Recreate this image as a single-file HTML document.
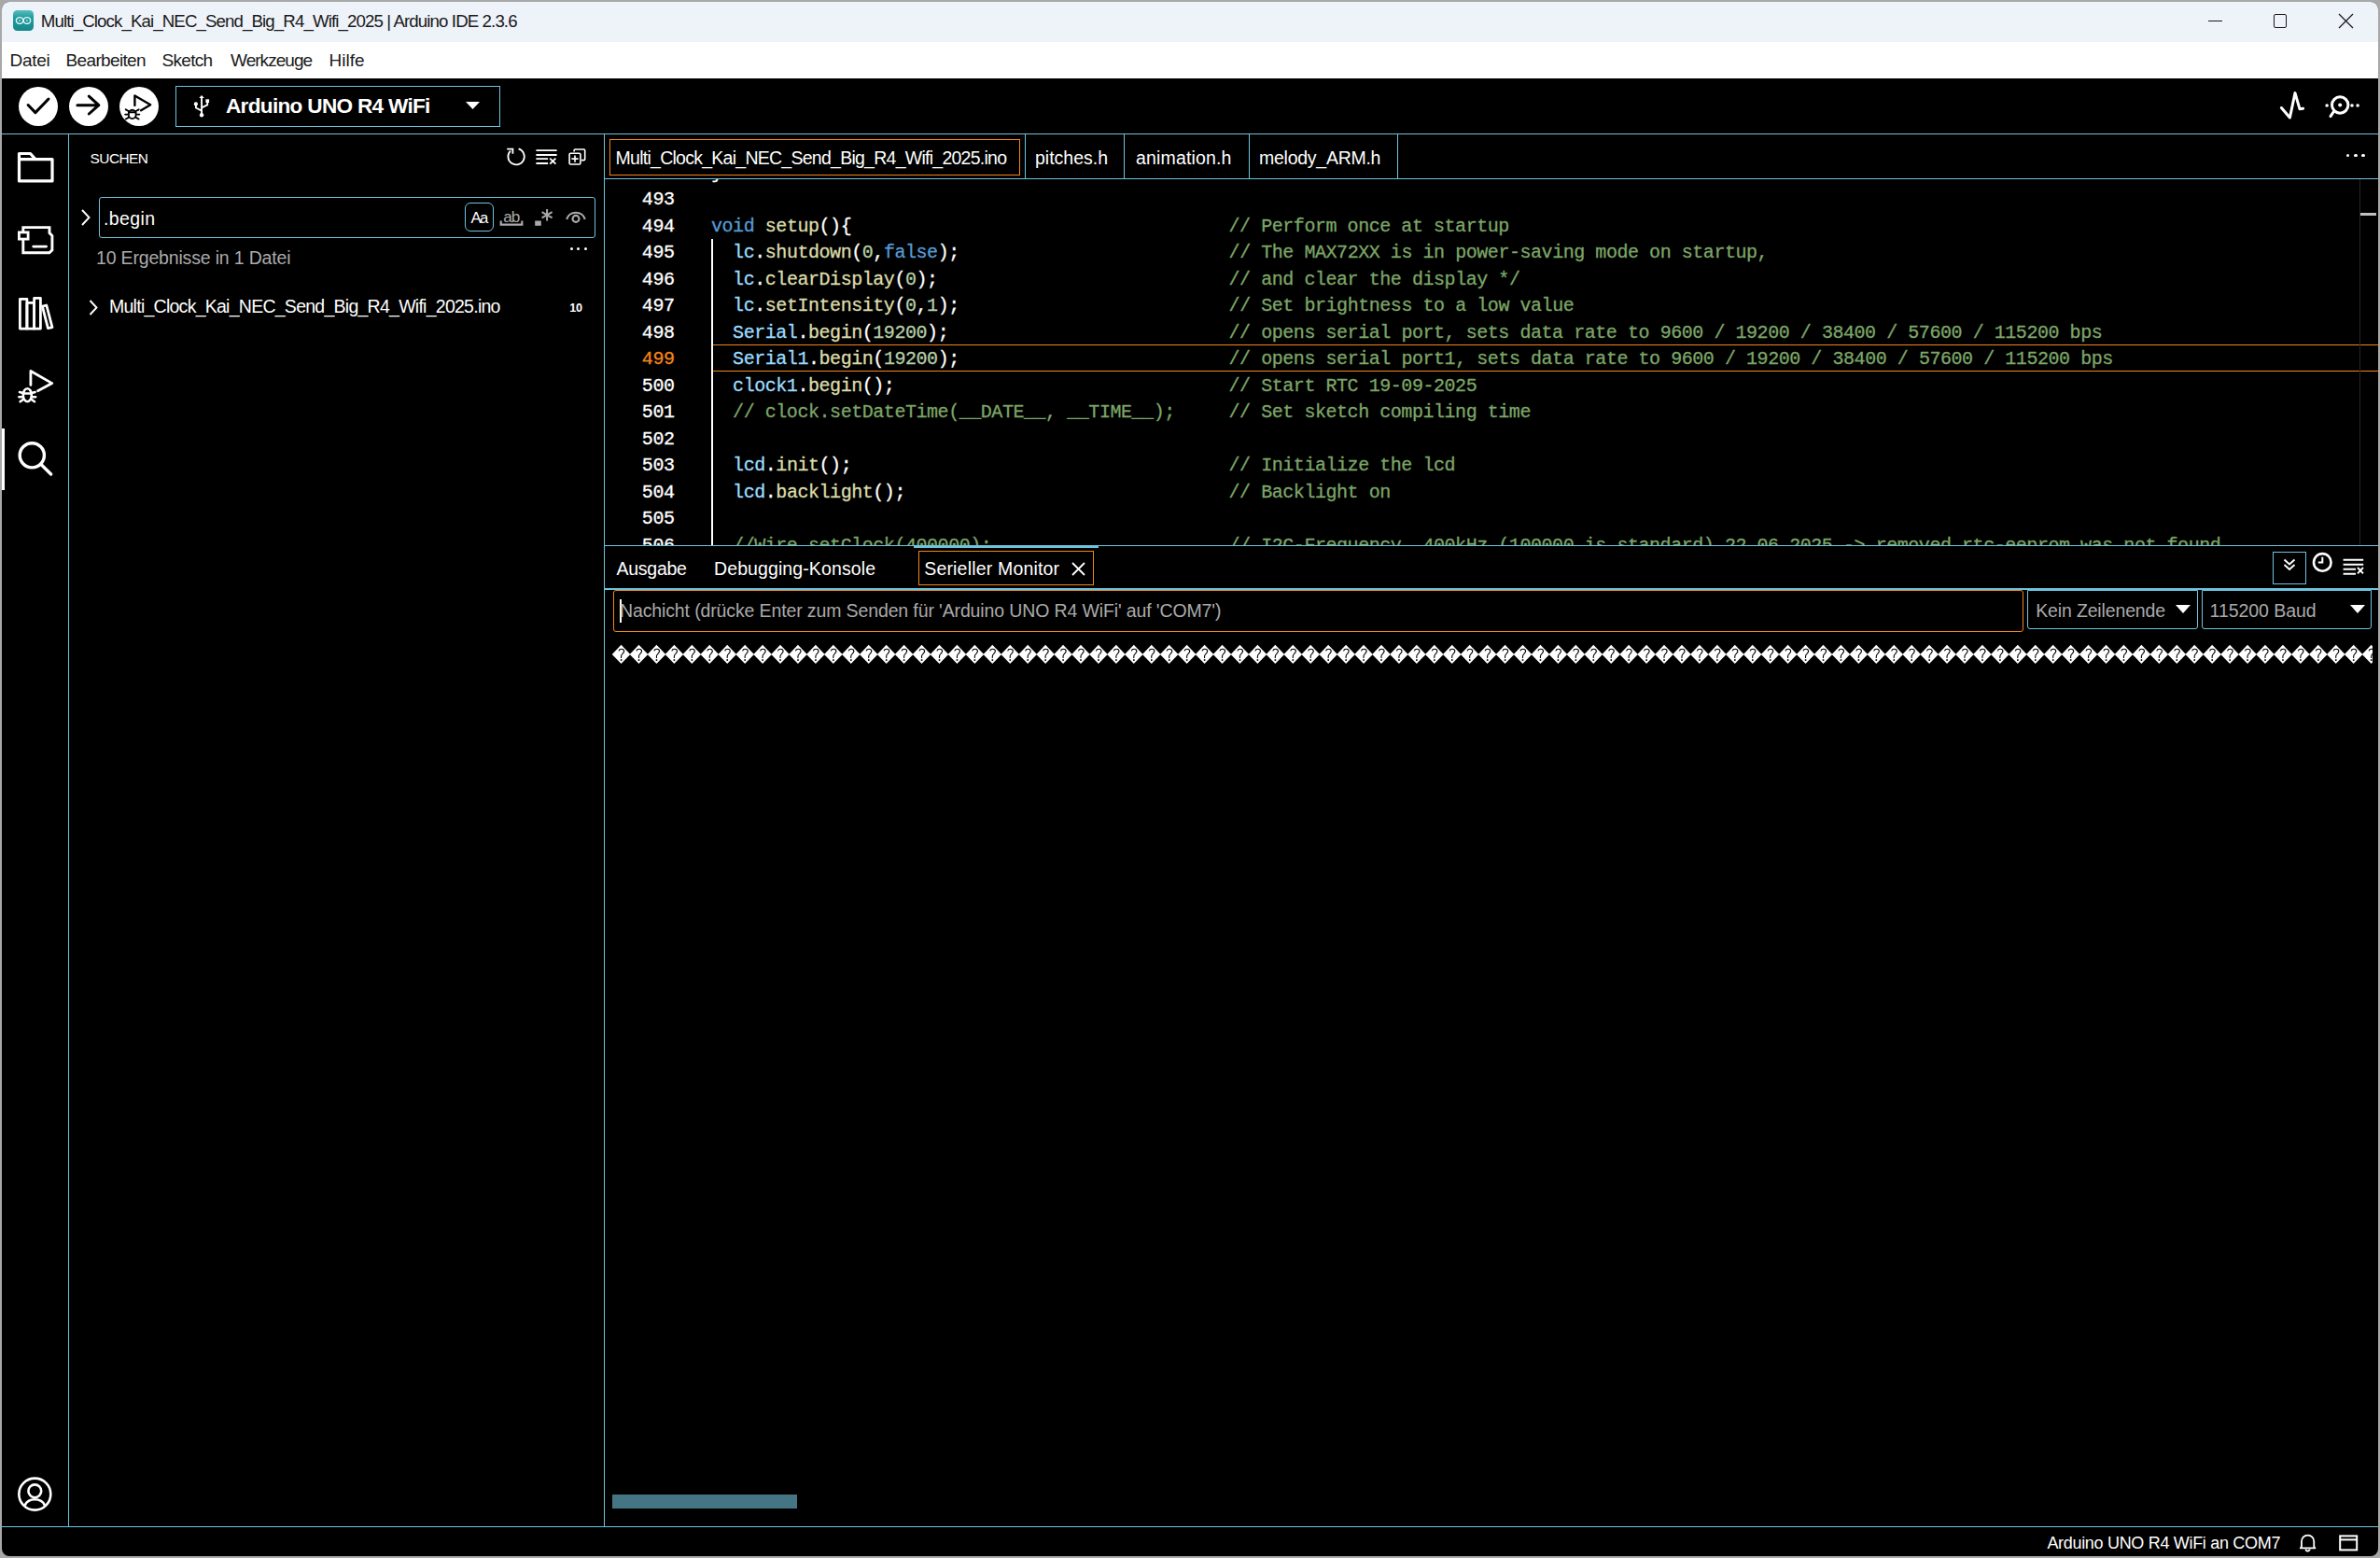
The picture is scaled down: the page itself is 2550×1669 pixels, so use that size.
<!DOCTYPE html><html><head><meta charset="utf-8"><title>Arduino IDE</title><style>
html,body{margin:0;padding:0;}
body{width:2550px;height:1669px;overflow:hidden;position:relative;background:#a8a8a8;font-family:"Liberation Sans", sans-serif;}
.r{position:absolute;}
.t{position:absolute;white-space:pre;line-height:1;}
.ln{position:absolute;left:0;width:74.5px;text-align:right;font-family:"Liberation Mono", monospace;font-size:20px;letter-spacing:-0.45px;line-height:28.5px;height:28.5px;-webkit-text-stroke:0.3px currentColor;}
.cl{position:absolute;left:114.0px;white-space:pre;font-family:"Liberation Mono", monospace;font-size:20px;letter-spacing:-0.45px;line-height:28.5px;height:28.5px;-webkit-text-stroke:0.3px currentColor;}
</style></head><body><div class="r" style="left:2px;top:2px;width:2546px;height:1665px;background:#000;border-radius:8px;"></div>
<div class="r" style="left:2px;top:2px;width:2546px;height:43px;background:#eef2f9;border-radius:8px 8px 0 0;"></div>
<div class="r" style="left:2px;top:45px;width:2546px;height:39px;background:#ffffff;"></div>
<svg class="r" style="left:13px;top:11px" width="24" height="22" viewBox="0 0 24 22"><defs><linearGradient id="ag" x1="0" y1="0" x2="0" y2="1"><stop offset="0" stop-color="#5cbcbd"/><stop offset="0.35" stop-color="#1e9fa1"/><stop offset="1" stop-color="#17878a"/></linearGradient></defs><rect x="1" y="0" width="22" height="22" rx="4.5" fill="url(#ag)"/><g fill="none" stroke="#e6f4f4" stroke-width="1.4"><ellipse cx="8.1" cy="11" rx="3.7" ry="3.4"/><ellipse cx="15.9" cy="11" rx="3.7" ry="3.4"/></g><rect x="7.2" y="10.3" width="1.6" height="1.4" fill="#cde8e8"/><rect x="15.1" y="10.3" width="1.6" height="1.4" fill="#cde8e8"/></svg>
<div class="t" style="left:43.8px;top:13.67px;font-size:18.7px;color:#1a1a1a;font-weight:400;letter-spacing:-0.9px;font-family:"Liberation Sans", sans-serif;">Multi_Clock_Kai_NEC_Send_Big_R4_Wifi_2025 | Arduino IDE 2.3.6</div>
<div class="r" style="left:2366px;top:22px;width:15px;height:1.2px;background:#1a1a1a;"></div>
<div class="r" style="left:2435.5px;top:15px;width:14.5px;height:14.5px;box-sizing:border-box;border:1.3px solid #1a1a1a;border-radius:2px;"></div>
<svg class="r" style="left:2505px;top:14px" width="17" height="17" viewBox="0 0 17 17"><path d="M1 1L16 16M16 1L1 16" stroke="#1a1a1a" stroke-width="1.3"/></svg>
<div class="t" style="left:10.6px;top:55.22px;font-size:19px;color:#1a1a1a;font-weight:400;letter-spacing:-0.3px;font-family:"Liberation Sans", sans-serif;">Datei</div>
<div class="t" style="left:70.6px;top:55.22px;font-size:19px;color:#1a1a1a;font-weight:400;letter-spacing:-0.66px;font-family:"Liberation Sans", sans-serif;">Bearbeiten</div>
<div class="t" style="left:173.4px;top:55.22px;font-size:19px;color:#1a1a1a;font-weight:400;letter-spacing:-0.66px;font-family:"Liberation Sans", sans-serif;">Sketch</div>
<div class="t" style="left:247px;top:55.22px;font-size:19px;color:#1a1a1a;font-weight:400;letter-spacing:-0.96px;font-family:"Liberation Sans", sans-serif;">Werkzeuge</div>
<div class="t" style="left:352.4px;top:55.22px;font-size:19px;color:#1a1a1a;font-weight:400;letter-spacing:0.05px;font-family:"Liberation Sans", sans-serif;">Hilfe</div>
<div class="r" style="left:2px;top:143px;width:2546px;height:1px;background:#6fc3df;"></div>
<div class="r" style="left:19.8px;top:92.9px;width:42.2px;height:42.2px;border-radius:50%;background:#fff"></div>
<div class="r" style="left:73.8px;top:92.9px;width:42.2px;height:42.2px;border-radius:50%;background:#fff"></div>
<div class="r" style="left:127.9px;top:92.9px;width:42.2px;height:42.2px;border-radius:50%;background:#fff"></div>
<svg class="r" style="left:20px;top:93px" width="42" height="42" viewBox="0 0 42 42"><path d="M10.1 19.5L17.9 27.6L32 13" fill="none" stroke="#000" stroke-width="3" stroke-linecap="round" stroke-linejoin="round"/></svg>
<svg class="r" style="left:74px;top:93px" width="42" height="42" viewBox="0 0 42 42"><path d="M8.9 19.7H31.8M21.3 10.1L31.8 19.7L21.3 29" fill="none" stroke="#000" stroke-width="3" stroke-linecap="round" stroke-linejoin="round"/></svg>
<svg class="r" style="left:128px;top:93px" width="42" height="42" viewBox="0 0 42 42"><path d="M16.4 19.9V9.5L33.2 19.2L23.1 25.3" fill="none" stroke="#000" stroke-width="2.4" stroke-linecap="round" stroke-linejoin="round"/><g fill="none" stroke="#000" stroke-width="1.9" stroke-linecap="round"><ellipse cx="13.7" cy="29.4" rx="4" ry="4.7"/><path d="M9.9 27.2H17.5M6.7 24.3L9.7 26M20.7 24.3L17.7 26M6.1 29.6H9.6M17.8 29.6H21.3M6.8 34.5L9.8 32.8M20.6 34.5L17.6 32.8"/></g></svg>
<div class="r" style="left:188px;top:92px;width:348px;height:44px;box-sizing:border-box;border:1px solid #6fc3df;"></div>
<svg class="r" style="left:203px;top:97px" width="26" height="34" viewBox="0 0 26 34"><g fill="none" stroke="#fff" stroke-width="1.9" stroke-linejoin="round"><path d="M13.05 7.5V26"/><path d="M6.9 14.4V18.5L13.05 21.6"/><path d="M19.2 12.2V15.4L13.05 18.4"/></g><path d="M10.3 7.9L13.05 5L15.8 7.9Z" fill="#fff"/><circle cx="13.05" cy="26.2" r="2.2" fill="#fff"/><circle cx="6.9" cy="14.4" r="2.1" fill="#fff"/><rect x="17.4" y="9.3" width="3.7" height="3.7" fill="#fff"/></svg>
<div class="t" style="left:242px;top:103.07px;font-size:22.6px;color:#fff;font-weight:700;letter-spacing:-0.7px;font-family:"Liberation Sans", sans-serif;">Arduino UNO R4 WiFi</div>
<svg class="r" style="left:498px;top:108px" width="17" height="10" viewBox="0 0 17 10"><path d="M1 1H16L8.5 9Z" fill="#fff"/></svg>
<svg class="r" style="left:2440px;top:96px" width="32" height="34" viewBox="0 0 32 34"><path d="M4.4 19.5L13.4 30L19 3.6L24 20.8L27.6 20.3" fill="none" stroke="#fff" stroke-width="3" stroke-linecap="round" stroke-linejoin="round"/></svg>
<svg class="r" style="left:2488px;top:96px" width="44" height="34" viewBox="0 0 44 34"><circle cx="19.2" cy="16.5" r="8.7" fill="none" stroke="#fff" stroke-width="3"/><circle cx="19.2" cy="16.5" r="2" fill="#fff"/><circle cx="5.1" cy="17" r="1.8" fill="#fff"/><circle cx="32" cy="17" r="1.8" fill="#fff"/><circle cx="38.1" cy="17" r="1.8" fill="#fff"/><path d="M12.8 23L9 28.6" stroke="#fff" stroke-width="3" stroke-linecap="round"/></svg>
<div class="r" style="left:73px;top:144px;width:1px;height:1491px;background:#6fc3df;"></div>
<div class="r" style="left:2px;top:459px;width:3px;height:66px;background:#fff;"></div>
<svg class="r" style="left:17px;top:161px" width="44" height="37" viewBox="0 0 44 37"><path d="M3.5 3.5H15.5L21 9.6H39V32.9H3.5Z M3.5 9.6H21" fill="none" stroke="#fff" stroke-width="3.2" stroke-linejoin="round"/></svg>
<svg class="r" style="left:17px;top:240px" width="44" height="34" viewBox="0 0 44 34"><path d="M7.8 3.6H36V9.6L38.9 12.6V27.8L35.9 30.7H7.8V3.6Z" fill="none" stroke="#fff" stroke-width="2.9" stroke-linejoin="miter"/><rect x="3.4" y="8.9" width="9.7" height="7.2" fill="#000" stroke="#fff" stroke-width="2.8"/><path d="M18.7 24.1H32.6" stroke="#fff" stroke-width="2.8" stroke-linecap="round"/></svg>
<svg class="r" style="left:17px;top:315px" width="44" height="42" viewBox="0 0 44 42"><g fill="none" stroke="#fff" stroke-width="2.8" stroke-linejoin="round"><path d="M4.4 5.3H11.9V37.1H4.4Z"/><path d="M11.9 9.4H19.6V37.1H11.9Z"/><path d="M19.6 4.4H26.4V37.1H19.6Z"/><path d="M28.4 13.1L32.8 12L39 35.6L34.4 36.6Z"/></g></svg>
<svg class="r" style="left:17px;top:394px" width="44" height="42" viewBox="0 0 44 42"><path d="M15.9 18.4V3.5L38.8 16.6L23.5 24.7" fill="none" stroke="#fff" stroke-width="2.8" stroke-linecap="round" stroke-linejoin="round"/><g fill="none" stroke="#fff" stroke-width="2.6" stroke-linecap="round"><ellipse cx="12.3" cy="29.2" rx="4.5" ry="7"/><path d="M7.8 27.5H16.8M4 26L7.5 27M20.6 26L17.1 27M3.4 31.3H7.6M17 31.3H21.2M4.6 36.2L7.8 34M20 36.2L16.8 34"/></g></svg>
<svg class="r" style="left:17px;top:470px" width="44" height="44" viewBox="0 0 44 44"><circle cx="17.3" cy="17.8" r="13.1" fill="none" stroke="#fff" stroke-width="3.4"/><path d="M27 27.5L37.6 38" stroke="#fff" stroke-width="3.4" stroke-linecap="round"/></svg>
<svg class="r" style="left:17px;top:1580px" width="40" height="40" viewBox="0 0 40 40"><circle cx="20.3" cy="20.6" r="17" fill="none" stroke="#fff" stroke-width="2.6"/><circle cx="20.3" cy="17.3" r="6.9" fill="none" stroke="#fff" stroke-width="2.6"/><path d="M9.6 32.6C11.5 28.3 15.6 26.3 20.3 26.3C25 26.3 29.1 28.3 31 32.6" fill="none" stroke="#fff" stroke-width="2.6"/></svg>
<div class="r" style="left:647px;top:144px;width:1px;height:1491px;background:#6fc3df;"></div>
<div class="t" style="left:96.5px;top:161.76px;font-size:15.4px;color:#fff;font-weight:400;letter-spacing:-0.5px;font-family:"Liberation Sans", sans-serif;">SUCHEN</div>
<svg class="r" style="left:540px;top:155px" width="24" height="26" viewBox="0 0 24 26"><path d="M6.9 6.6A8.7 8.7 0 1 0 15.6 4.4" fill="none" stroke="#fff" stroke-width="1.8"/><path d="M3.2 4.7H9.4V9.8" fill="none" stroke="#fff" stroke-width="1.8"/></svg>
<svg class="r" style="left:572px;top:157px" width="28" height="22" viewBox="0 0 28 22"><g stroke="#fff" stroke-width="1.8"><path d="M2.4 4.1H24.6M2.4 9H24.6M2.4 13.1H15.1M2.4 18H15.1M17.2 12.6L23.4 18.6M23.4 12.6L17.2 18.6"/></g></svg>
<svg class="r" style="left:606px;top:156px" width="24" height="24" viewBox="0 0 24 24"><path d="M9.1 6.6V5.2Q9.1 4 10.3 4H19.5Q20.7 4 20.7 5.2V14.4Q20.7 15.6 19.5 15.6H17" fill="none" stroke="#fff" stroke-width="1.6"/><rect x="4.1" y="8.2" width="11.8" height="11.8" rx="1.2" fill="none" stroke="#fff" stroke-width="1.6"/><path d="M10 10.5V17.7M6.4 14.1H13.6" stroke="#fff" stroke-width="1.6"/></svg>
<svg class="r" style="left:84px;top:222px" width="16" height="22" viewBox="0 0 16 22"><path d="M4 3L11.5 11L4 19" fill="none" stroke="#fff" stroke-width="1.9"/></svg>
<div class="r" style="left:106px;top:211px;width:532px;height:44px;box-sizing:border-box;border:1.5px solid #6fc3df;border-radius:3px;"></div>
<div class="t" style="left:111px;top:224.79px;font-size:19.5px;color:#fff;font-weight:400;letter-spacing:0.38px;font-family:"Liberation Sans", sans-serif;">.begin</div>
<div class="r" style="left:498px;top:217px;width:31px;height:31px;box-sizing:border-box;border:1.5px solid #6fc3df;border-radius:6px;"></div>
<div class="t" style="left:504.4px;top:225.78px;font-size:16.8px;color:#fff;font-weight:400;letter-spacing:-1.5px;font-family:"Liberation Sans", sans-serif;">Aa</div>
<div class="t" style="left:539.3px;top:223.74px;font-size:17.2px;color:#aaaaaa;font-weight:400;letter-spacing:-1.2px;font-family:"Liberation Sans", sans-serif;">ab</div>
<svg class="r" style="left:534px;top:235px" width="28" height="9" viewBox="0 0 28 9"><path d="M2.7 1.5V5.6H25.3V1.5" fill="none" stroke="#aaaaaa" stroke-width="2.2"/></svg>
<svg class="r" style="left:570px;top:220px" width="26" height="24" viewBox="0 0 26 24"><rect x="3.2" y="16.5" width="6.6" height="5.3" fill="#aaaaaa"/><g stroke="#aaaaaa" stroke-width="2"><path d="M16.1 4V16.4M10.6 7.1L21.6 13.3M21.6 7.1L10.6 13.3"/></g></svg>
<svg class="r" style="left:604px;top:222px" width="26" height="18" viewBox="0 0 26 18"><path d="M3.2 12.9A10.3 10.3 0 0 1 22.8 12.9" fill="none" stroke="#aaaaaa" stroke-width="2.2"/><circle cx="13" cy="12.4" r="3.5" fill="none" stroke="#aaaaaa" stroke-width="2.1"/></svg>
<div class="r" style="left:610.5px;top:265px;width:3.2px;height:3.2px;border-radius:50%;background:#fff"></div>
<div class="r" style="left:617.9px;top:265px;width:3.2px;height:3.2px;border-radius:50%;background:#fff"></div>
<div class="r" style="left:625.5px;top:265px;width:3.2px;height:3.2px;border-radius:50%;background:#fff"></div>
<div class="t" style="left:103px;top:267.49px;font-size:19.5px;color:#aaaaaa;font-weight:400;letter-spacing:-0.17px;font-family:"Liberation Sans", sans-serif;">10 Ergebnisse in 1 Datei</div>
<svg class="r" style="left:92px;top:319px" width="16" height="22" viewBox="0 0 16 22"><path d="M4.5 3L11.5 10.5L4.5 18" fill="none" stroke="#fff" stroke-width="1.9"/></svg>
<div class="t" style="left:117px;top:318.99px;font-size:19.5px;color:#fff;font-weight:400;letter-spacing:-0.74px;font-family:"Liberation Sans", sans-serif;">Multi_Clock_Kai_NEC_Send_Big_R4_Wifi_2025.ino</div>
<div class="t" style="left:610.2px;top:323.53px;font-size:12.6px;color:#fff;font-weight:700;letter-spacing:-0.3px;font-family:"Liberation Sans", sans-serif;">10</div>
<div class="r" style="left:648px;top:191px;width:1900px;height:1px;background:#6fc3df;"></div>
<div class="r" style="left:653px;top:149px;width:440px;height:38.5px;box-sizing:border-box;border:1.3px solid #f38518;"></div>
<div class="t" style="left:659.6px;top:160.09px;font-size:19.5px;color:#fff;font-weight:400;letter-spacing:-0.74px;font-family:"Liberation Sans", sans-serif;">Multi_Clock_Kai_NEC_Send_Big_R4_Wifi_2025.ino</div>
<div class="t" style="left:1109px;top:160.09px;font-size:19.5px;color:#fff;font-weight:400;letter-spacing:0px;font-family:"Liberation Sans", sans-serif;">pitches.h</div>
<div class="t" style="left:1217px;top:160.09px;font-size:19.5px;color:#fff;font-weight:400;letter-spacing:0.16px;font-family:"Liberation Sans", sans-serif;">animation.h</div>
<div class="t" style="left:1349px;top:160.09px;font-size:19.5px;color:#fff;font-weight:400;letter-spacing:-0.26px;font-family:"Liberation Sans", sans-serif;">melody_ARM.h</div>
<div class="r" style="left:1097.5px;top:144px;width:1px;height:47px;background:#6fc3df;"></div>
<div class="r" style="left:1204px;top:144px;width:1px;height:47px;background:#6fc3df;"></div>
<div class="r" style="left:1337.5px;top:144px;width:1px;height:47px;background:#6fc3df;"></div>
<div class="r" style="left:1497px;top:144px;width:1px;height:47px;background:#6fc3df;"></div>
<div class="r" style="left:2514.0px;top:164.9px;width:3.2px;height:3.2px;border-radius:50%;background:#fff"></div>
<div class="r" style="left:2522.4px;top:164.9px;width:3.2px;height:3.2px;border-radius:50%;background:#fff"></div>
<div class="r" style="left:2530.4px;top:164.9px;width:3.2px;height:3.2px;border-radius:50%;background:#fff"></div>
<div class="r" style="left:648px;top:192px;width:1900px;height:392px;overflow:hidden">
<div class="r" style="left:115.5px;top:177.10px;width:1900px;height:28.9px;box-sizing:border-box;border-top:1.2px solid #f38518;border-bottom:1.2px solid #f38518"></div>
<div class="r" style="left:113.9px;top:63.50px;width:1.9px;height:400px;background:#fff"></div>
<div class="cl" style="top:-20.10px"><span style="color:#ffffff">}</span></div>
<div class="ln" style="top:7.90px;color:#fff">493</div>
<div class="cl" style="top:7.90px"></div>
<div class="ln" style="top:36.90px;color:#fff">494</div>
<div class="cl" style="top:36.90px"><span style="color:#569cd6">void</span><span style="color:#ffffff"> </span><span style="color:#dcdcaa">setup</span><span style="color:#ffffff">(){</span>                                   <span style="color:#7ca668">// Perform once at startup</span></div>
<div class="ln" style="top:64.90px;color:#fff">495</div>
<div class="cl" style="top:64.90px"><span style="color:#ffffff">  </span><span style="color:#9cdcfe">lc</span><span style="color:#ffffff">.</span><span style="color:#dcdcaa">shutdown</span><span style="color:#ffffff">(</span><span style="color:#b5cea8">0</span><span style="color:#ffffff">,</span><span style="color:#569cd6">false</span><span style="color:#ffffff">);</span>                         <span style="color:#7ca668">// The MAX72XX is in power-saving mode on startup,</span></div>
<div class="ln" style="top:93.90px;color:#fff">496</div>
<div class="cl" style="top:93.90px"><span style="color:#ffffff">  </span><span style="color:#9cdcfe">lc</span><span style="color:#ffffff">.</span><span style="color:#dcdcaa">clearDisplay</span><span style="color:#ffffff">(</span><span style="color:#b5cea8">0</span><span style="color:#ffffff">);</span>                           <span style="color:#7ca668">// and clear the display */</span></div>
<div class="ln" style="top:121.90px;color:#fff">497</div>
<div class="cl" style="top:121.90px"><span style="color:#ffffff">  </span><span style="color:#9cdcfe">lc</span><span style="color:#ffffff">.</span><span style="color:#dcdcaa">setIntensity</span><span style="color:#ffffff">(</span><span style="color:#b5cea8">0</span><span style="color:#ffffff">,</span><span style="color:#b5cea8">1</span><span style="color:#ffffff">);</span>                         <span style="color:#7ca668">// Set brightness to a low value</span></div>
<div class="ln" style="top:150.90px;color:#fff">498</div>
<div class="cl" style="top:150.90px"><span style="color:#ffffff">  </span><span style="color:#9cdcfe">Serial</span><span style="color:#ffffff">.</span><span style="color:#dcdcaa">begin</span><span style="color:#ffffff">(</span><span style="color:#b5cea8">19200</span><span style="color:#ffffff">);</span>                          <span style="color:#7ca668">// opens serial port, sets data rate to 9600 / 19200 / 38400 / 57600 / 115200 bps</span></div>
<div class="ln" style="top:178.90px;color:#f38518">499</div>
<div class="cl" style="top:178.90px"><span style="color:#ffffff">  </span><span style="color:#9cdcfe">Serial1</span><span style="color:#ffffff">.</span><span style="color:#dcdcaa">begin</span><span style="color:#ffffff">(</span><span style="color:#b5cea8">19200</span><span style="color:#ffffff">);</span>                         <span style="color:#7ca668">// opens serial port1, sets data rate to 9600 / 19200 / 38400 / 57600 / 115200 bps</span></div>
<div class="ln" style="top:207.90px;color:#fff">500</div>
<div class="cl" style="top:207.90px"><span style="color:#ffffff">  </span><span style="color:#9cdcfe">clock1</span><span style="color:#ffffff">.</span><span style="color:#dcdcaa">begin</span><span style="color:#ffffff">();</span>                               <span style="color:#7ca668">// Start RTC 19-09-2025</span></div>
<div class="ln" style="top:235.90px;color:#fff">501</div>
<div class="cl" style="top:235.90px"><span style="color:#ffffff">  </span><span style="color:#7ca668">// clock.setDateTime(__DATE__, __TIME__);</span>     <span style="color:#7ca668">// Set sketch compiling time</span></div>
<div class="ln" style="top:264.90px;color:#fff">502</div>
<div class="cl" style="top:264.90px"></div>
<div class="ln" style="top:292.90px;color:#fff">503</div>
<div class="cl" style="top:292.90px"><span style="color:#ffffff">  </span><span style="color:#9cdcfe">lcd</span><span style="color:#ffffff">.</span><span style="color:#dcdcaa">init</span><span style="color:#ffffff">();</span>                                   <span style="color:#7ca668">// Initialize the lcd</span></div>
<div class="ln" style="top:321.90px;color:#fff">504</div>
<div class="cl" style="top:321.90px"><span style="color:#ffffff">  </span><span style="color:#9cdcfe">lcd</span><span style="color:#ffffff">.</span><span style="color:#dcdcaa">backlight</span><span style="color:#ffffff">();</span>                              <span style="color:#7ca668">// Backlight on</span></div>
<div class="ln" style="top:349.90px;color:#fff">505</div>
<div class="cl" style="top:349.90px"></div>
<div class="ln" style="top:378.90px;color:#fff">506</div>
<div class="cl" style="top:378.90px"><span style="color:#ffffff">  </span><span style="color:#7ca668">//Wire.setClock(400000);</span>                      <span style="color:#7ca668">// I2C-Frequency, 400kHz (100000 is standard) 22.06.2025 -&gt; removed rtc-eeprom was not found</span></div>
</div>
<div class="r" style="left:2528px;top:192px;width:1px;height:392px;background:#262626;"></div>
<div class="r" style="left:2529px;top:228px;width:17px;height:3px;background:#c0c0c0;"></div>
<div class="r" style="left:648px;top:584px;width:1900px;height:1px;background:#6fc3df;"></div>
<div class="r" style="left:979px;top:584px;width:197.5px;height:3px;background:#6fc3df;"></div>
<div class="t" style="left:660.4px;top:599.69px;font-size:19.5px;color:#fff;font-weight:400;letter-spacing:-0.24px;font-family:"Liberation Sans", sans-serif;">Ausgabe</div>
<div class="t" style="left:765px;top:599.69px;font-size:19.5px;color:#fff;font-weight:400;letter-spacing:0.105px;font-family:"Liberation Sans", sans-serif;">Debugging-Konsole</div>
<div class="r" style="left:984px;top:589.9px;width:187.5px;height:37.6px;box-sizing:border-box;border:1.3px solid #f38518;"></div>
<div class="t" style="left:990.2px;top:599.69px;font-size:19.5px;color:#fff;font-weight:400;letter-spacing:0.185px;font-family:"Liberation Sans", sans-serif;">Serieller Monitor</div>
<svg class="r" style="left:1146px;top:600px" width="20" height="20" viewBox="0 0 20 20"><path d="M3 3L16 16M16 3L3 16" stroke="#fff" stroke-width="1.8"/></svg>
<div class="r" style="left:2435px;top:591px;width:36px;height:35px;box-sizing:border-box;border:1px solid #6fc3df;"></div>
<svg class="r" style="left:2443px;top:596px" width="20" height="20" viewBox="0 0 20 20"><path d="M4.5 3.5L10 8.5L15.5 3.5M4.5 9L10 14L15.5 9" fill="none" stroke="#fff" stroke-width="1.9"/></svg>
<svg class="r" style="left:2476px;top:590px" width="26" height="26" viewBox="0 0 26 26"><circle cx="12.3" cy="12.4" r="9.3" fill="none" stroke="#fff" stroke-width="2.6"/><path d="M12.3 6.8V12.6H7.8" fill="none" stroke="#fff" stroke-width="2"/></svg>
<svg class="r" style="left:2508px;top:596px" width="28" height="22" viewBox="0 0 28 22"><g stroke="#fff" stroke-width="1.9"><path d="M2.6 3.8H24.2M2.6 8.8H24.2M2.6 13.8H16M2.6 18.8H16M18 12L24 18.3M24 12L18 18.3"/></g></svg>
<div class="r" style="left:648px;top:630px;width:1900px;height:1.5px;background:#6fc3df;"></div>
<div class="r" style="left:656.5px;top:632px;width:1511.5px;height:44.5px;box-sizing:border-box;border:1.3px solid #f38518;border-radius:3px;"></div>
<div class="r" style="left:664px;top:642px;width:2px;height:24.5px;background:#fff;"></div>
<div class="t" style="left:664px;top:645.19px;font-size:19.5px;color:#aaaaaa;font-weight:400;letter-spacing:-0.126px;font-family:"Liberation Sans", sans-serif;">Nachicht (drücke Enter zum Senden für &#x27;Arduino UNO R4 WiFi&#x27; auf &#x27;COM7&#x27;)</div>
<div class="r" style="left:2172px;top:631.5px;width:183px;height:42.5px;box-sizing:border-box;border:1.3px solid #6fc3df;border-radius:0 0 3px 3px;"></div>
<div class="t" style="left:2181.2px;top:645.39px;font-size:19.5px;color:#aaaaaa;font-weight:400;letter-spacing:-0.146px;font-family:"Liberation Sans", sans-serif;">Kein Zeilenende</div>
<svg class="r" style="left:2330px;top:647px" width="18" height="11" viewBox="0 0 18 11"><path d="M1 1H17L9 10Z" fill="#fff"/></svg>
<div class="r" style="left:2359px;top:631.5px;width:182px;height:42.5px;box-sizing:border-box;border:1.3px solid #6fc3df;border-radius:0 0 3px 3px;"></div>
<div class="t" style="left:2367.6px;top:645.39px;font-size:19.5px;color:#aaaaaa;font-weight:400;letter-spacing:-0.05px;font-family:"Liberation Sans", sans-serif;">115200 Baud</div>
<svg class="r" style="left:2517px;top:647px" width="18" height="11" viewBox="0 0 18 11"><path d="M1 1H17L9 10Z" fill="#fff"/></svg>
<svg class="r" style="left:648px;top:686px" width="1894" height="30"><g transform="translate(17.55 14.9)"><path d="M0 -10.1L9.8 0L0 10.1L-9.8 0Z" fill="#fff"/><path d="M-2.6 -3.6C-2.2 -5.1 -1 -5.6 0.3 -5.6C2 -5.6 3.1 -4.6 3.1 -3.1C3.1 -1 0 -0.4 0 2.2V4.1" fill="none" stroke="#000" stroke-width="1.1"/><rect x="-0.75" y="5.3" width="1.6" height="1.7" fill="#000"/></g><g transform="translate(36.49 14.9)"><path d="M0 -10.1L9.8 0L0 10.1L-9.8 0Z" fill="#fff"/><path d="M-2.6 -3.6C-2.2 -5.1 -1 -5.6 0.3 -5.6C2 -5.6 3.1 -4.6 3.1 -3.1C3.1 -1 0 -0.4 0 2.2V4.1" fill="none" stroke="#000" stroke-width="1.1"/><rect x="-0.75" y="5.3" width="1.6" height="1.7" fill="#000"/></g><g transform="translate(55.43 14.9)"><path d="M0 -10.1L9.8 0L0 10.1L-9.8 0Z" fill="#fff"/><path d="M-2.6 -3.6C-2.2 -5.1 -1 -5.6 0.3 -5.6C2 -5.6 3.1 -4.6 3.1 -3.1C3.1 -1 0 -0.4 0 2.2V4.1" fill="none" stroke="#000" stroke-width="1.1"/><rect x="-0.75" y="5.3" width="1.6" height="1.7" fill="#000"/></g><g transform="translate(74.37 14.9)"><path d="M0 -10.1L9.8 0L0 10.1L-9.8 0Z" fill="#fff"/><path d="M-2.6 -3.6C-2.2 -5.1 -1 -5.6 0.3 -5.6C2 -5.6 3.1 -4.6 3.1 -3.1C3.1 -1 0 -0.4 0 2.2V4.1" fill="none" stroke="#000" stroke-width="1.1"/><rect x="-0.75" y="5.3" width="1.6" height="1.7" fill="#000"/></g><g transform="translate(93.31 14.9)"><path d="M0 -10.1L9.8 0L0 10.1L-9.8 0Z" fill="#fff"/><path d="M-2.6 -3.6C-2.2 -5.1 -1 -5.6 0.3 -5.6C2 -5.6 3.1 -4.6 3.1 -3.1C3.1 -1 0 -0.4 0 2.2V4.1" fill="none" stroke="#000" stroke-width="1.1"/><rect x="-0.75" y="5.3" width="1.6" height="1.7" fill="#000"/></g><g transform="translate(112.25 14.9)"><path d="M0 -10.1L9.8 0L0 10.1L-9.8 0Z" fill="#fff"/><path d="M-2.6 -3.6C-2.2 -5.1 -1 -5.6 0.3 -5.6C2 -5.6 3.1 -4.6 3.1 -3.1C3.1 -1 0 -0.4 0 2.2V4.1" fill="none" stroke="#000" stroke-width="1.1"/><rect x="-0.75" y="5.3" width="1.6" height="1.7" fill="#000"/></g><g transform="translate(131.19 14.9)"><path d="M0 -10.1L9.8 0L0 10.1L-9.8 0Z" fill="#fff"/><path d="M-2.6 -3.6C-2.2 -5.1 -1 -5.6 0.3 -5.6C2 -5.6 3.1 -4.6 3.1 -3.1C3.1 -1 0 -0.4 0 2.2V4.1" fill="none" stroke="#000" stroke-width="1.1"/><rect x="-0.75" y="5.3" width="1.6" height="1.7" fill="#000"/></g><g transform="translate(150.13 14.9)"><path d="M0 -10.1L9.8 0L0 10.1L-9.8 0Z" fill="#fff"/><path d="M-2.6 -3.6C-2.2 -5.1 -1 -5.6 0.3 -5.6C2 -5.6 3.1 -4.6 3.1 -3.1C3.1 -1 0 -0.4 0 2.2V4.1" fill="none" stroke="#000" stroke-width="1.1"/><rect x="-0.75" y="5.3" width="1.6" height="1.7" fill="#000"/></g><g transform="translate(169.07 14.9)"><path d="M0 -10.1L9.8 0L0 10.1L-9.8 0Z" fill="#fff"/><path d="M-2.6 -3.6C-2.2 -5.1 -1 -5.6 0.3 -5.6C2 -5.6 3.1 -4.6 3.1 -3.1C3.1 -1 0 -0.4 0 2.2V4.1" fill="none" stroke="#000" stroke-width="1.1"/><rect x="-0.75" y="5.3" width="1.6" height="1.7" fill="#000"/></g><g transform="translate(188.01 14.9)"><path d="M0 -10.1L9.8 0L0 10.1L-9.8 0Z" fill="#fff"/><path d="M-2.6 -3.6C-2.2 -5.1 -1 -5.6 0.3 -5.6C2 -5.6 3.1 -4.6 3.1 -3.1C3.1 -1 0 -0.4 0 2.2V4.1" fill="none" stroke="#000" stroke-width="1.1"/><rect x="-0.75" y="5.3" width="1.6" height="1.7" fill="#000"/></g><g transform="translate(206.95 14.9)"><path d="M0 -10.1L9.8 0L0 10.1L-9.8 0Z" fill="#fff"/><path d="M-2.6 -3.6C-2.2 -5.1 -1 -5.6 0.3 -5.6C2 -5.6 3.1 -4.6 3.1 -3.1C3.1 -1 0 -0.4 0 2.2V4.1" fill="none" stroke="#000" stroke-width="1.1"/><rect x="-0.75" y="5.3" width="1.6" height="1.7" fill="#000"/></g><g transform="translate(225.89 14.9)"><path d="M0 -10.1L9.8 0L0 10.1L-9.8 0Z" fill="#fff"/><path d="M-2.6 -3.6C-2.2 -5.1 -1 -5.6 0.3 -5.6C2 -5.6 3.1 -4.6 3.1 -3.1C3.1 -1 0 -0.4 0 2.2V4.1" fill="none" stroke="#000" stroke-width="1.1"/><rect x="-0.75" y="5.3" width="1.6" height="1.7" fill="#000"/></g><g transform="translate(244.83 14.9)"><path d="M0 -10.1L9.8 0L0 10.1L-9.8 0Z" fill="#fff"/><path d="M-2.6 -3.6C-2.2 -5.1 -1 -5.6 0.3 -5.6C2 -5.6 3.1 -4.6 3.1 -3.1C3.1 -1 0 -0.4 0 2.2V4.1" fill="none" stroke="#000" stroke-width="1.1"/><rect x="-0.75" y="5.3" width="1.6" height="1.7" fill="#000"/></g><g transform="translate(263.77 14.9)"><path d="M0 -10.1L9.8 0L0 10.1L-9.8 0Z" fill="#fff"/><path d="M-2.6 -3.6C-2.2 -5.1 -1 -5.6 0.3 -5.6C2 -5.6 3.1 -4.6 3.1 -3.1C3.1 -1 0 -0.4 0 2.2V4.1" fill="none" stroke="#000" stroke-width="1.1"/><rect x="-0.75" y="5.3" width="1.6" height="1.7" fill="#000"/></g><g transform="translate(282.71 14.9)"><path d="M0 -10.1L9.8 0L0 10.1L-9.8 0Z" fill="#fff"/><path d="M-2.6 -3.6C-2.2 -5.1 -1 -5.6 0.3 -5.6C2 -5.6 3.1 -4.6 3.1 -3.1C3.1 -1 0 -0.4 0 2.2V4.1" fill="none" stroke="#000" stroke-width="1.1"/><rect x="-0.75" y="5.3" width="1.6" height="1.7" fill="#000"/></g><g transform="translate(301.65 14.9)"><path d="M0 -10.1L9.8 0L0 10.1L-9.8 0Z" fill="#fff"/><path d="M-2.6 -3.6C-2.2 -5.1 -1 -5.6 0.3 -5.6C2 -5.6 3.1 -4.6 3.1 -3.1C3.1 -1 0 -0.4 0 2.2V4.1" fill="none" stroke="#000" stroke-width="1.1"/><rect x="-0.75" y="5.3" width="1.6" height="1.7" fill="#000"/></g><g transform="translate(320.59 14.9)"><path d="M0 -10.1L9.8 0L0 10.1L-9.8 0Z" fill="#fff"/><path d="M-2.6 -3.6C-2.2 -5.1 -1 -5.6 0.3 -5.6C2 -5.6 3.1 -4.6 3.1 -3.1C3.1 -1 0 -0.4 0 2.2V4.1" fill="none" stroke="#000" stroke-width="1.1"/><rect x="-0.75" y="5.3" width="1.6" height="1.7" fill="#000"/></g><g transform="translate(339.53 14.9)"><path d="M0 -10.1L9.8 0L0 10.1L-9.8 0Z" fill="#fff"/><path d="M-2.6 -3.6C-2.2 -5.1 -1 -5.6 0.3 -5.6C2 -5.6 3.1 -4.6 3.1 -3.1C3.1 -1 0 -0.4 0 2.2V4.1" fill="none" stroke="#000" stroke-width="1.1"/><rect x="-0.75" y="5.3" width="1.6" height="1.7" fill="#000"/></g><g transform="translate(358.47 14.9)"><path d="M0 -10.1L9.8 0L0 10.1L-9.8 0Z" fill="#fff"/><path d="M-2.6 -3.6C-2.2 -5.1 -1 -5.6 0.3 -5.6C2 -5.6 3.1 -4.6 3.1 -3.1C3.1 -1 0 -0.4 0 2.2V4.1" fill="none" stroke="#000" stroke-width="1.1"/><rect x="-0.75" y="5.3" width="1.6" height="1.7" fill="#000"/></g><g transform="translate(377.41 14.9)"><path d="M0 -10.1L9.8 0L0 10.1L-9.8 0Z" fill="#fff"/><path d="M-2.6 -3.6C-2.2 -5.1 -1 -5.6 0.3 -5.6C2 -5.6 3.1 -4.6 3.1 -3.1C3.1 -1 0 -0.4 0 2.2V4.1" fill="none" stroke="#000" stroke-width="1.1"/><rect x="-0.75" y="5.3" width="1.6" height="1.7" fill="#000"/></g><g transform="translate(396.35 14.9)"><path d="M0 -10.1L9.8 0L0 10.1L-9.8 0Z" fill="#fff"/><path d="M-2.6 -3.6C-2.2 -5.1 -1 -5.6 0.3 -5.6C2 -5.6 3.1 -4.6 3.1 -3.1C3.1 -1 0 -0.4 0 2.2V4.1" fill="none" stroke="#000" stroke-width="1.1"/><rect x="-0.75" y="5.3" width="1.6" height="1.7" fill="#000"/></g><g transform="translate(415.29 14.9)"><path d="M0 -10.1L9.8 0L0 10.1L-9.8 0Z" fill="#fff"/><path d="M-2.6 -3.6C-2.2 -5.1 -1 -5.6 0.3 -5.6C2 -5.6 3.1 -4.6 3.1 -3.1C3.1 -1 0 -0.4 0 2.2V4.1" fill="none" stroke="#000" stroke-width="1.1"/><rect x="-0.75" y="5.3" width="1.6" height="1.7" fill="#000"/></g><g transform="translate(434.23 14.9)"><path d="M0 -10.1L9.8 0L0 10.1L-9.8 0Z" fill="#fff"/><path d="M-2.6 -3.6C-2.2 -5.1 -1 -5.6 0.3 -5.6C2 -5.6 3.1 -4.6 3.1 -3.1C3.1 -1 0 -0.4 0 2.2V4.1" fill="none" stroke="#000" stroke-width="1.1"/><rect x="-0.75" y="5.3" width="1.6" height="1.7" fill="#000"/></g><g transform="translate(453.17 14.9)"><path d="M0 -10.1L9.8 0L0 10.1L-9.8 0Z" fill="#fff"/><path d="M-2.6 -3.6C-2.2 -5.1 -1 -5.6 0.3 -5.6C2 -5.6 3.1 -4.6 3.1 -3.1C3.1 -1 0 -0.4 0 2.2V4.1" fill="none" stroke="#000" stroke-width="1.1"/><rect x="-0.75" y="5.3" width="1.6" height="1.7" fill="#000"/></g><g transform="translate(472.11 14.9)"><path d="M0 -10.1L9.8 0L0 10.1L-9.8 0Z" fill="#fff"/><path d="M-2.6 -3.6C-2.2 -5.1 -1 -5.6 0.3 -5.6C2 -5.6 3.1 -4.6 3.1 -3.1C3.1 -1 0 -0.4 0 2.2V4.1" fill="none" stroke="#000" stroke-width="1.1"/><rect x="-0.75" y="5.3" width="1.6" height="1.7" fill="#000"/></g><g transform="translate(491.05 14.9)"><path d="M0 -10.1L9.8 0L0 10.1L-9.8 0Z" fill="#fff"/><path d="M-2.6 -3.6C-2.2 -5.1 -1 -5.6 0.3 -5.6C2 -5.6 3.1 -4.6 3.1 -3.1C3.1 -1 0 -0.4 0 2.2V4.1" fill="none" stroke="#000" stroke-width="1.1"/><rect x="-0.75" y="5.3" width="1.6" height="1.7" fill="#000"/></g><g transform="translate(509.99 14.9)"><path d="M0 -10.1L9.8 0L0 10.1L-9.8 0Z" fill="#fff"/><path d="M-2.6 -3.6C-2.2 -5.1 -1 -5.6 0.3 -5.6C2 -5.6 3.1 -4.6 3.1 -3.1C3.1 -1 0 -0.4 0 2.2V4.1" fill="none" stroke="#000" stroke-width="1.1"/><rect x="-0.75" y="5.3" width="1.6" height="1.7" fill="#000"/></g><g transform="translate(528.93 14.9)"><path d="M0 -10.1L9.8 0L0 10.1L-9.8 0Z" fill="#fff"/><path d="M-2.6 -3.6C-2.2 -5.1 -1 -5.6 0.3 -5.6C2 -5.6 3.1 -4.6 3.1 -3.1C3.1 -1 0 -0.4 0 2.2V4.1" fill="none" stroke="#000" stroke-width="1.1"/><rect x="-0.75" y="5.3" width="1.6" height="1.7" fill="#000"/></g><g transform="translate(547.87 14.9)"><path d="M0 -10.1L9.8 0L0 10.1L-9.8 0Z" fill="#fff"/><path d="M-2.6 -3.6C-2.2 -5.1 -1 -5.6 0.3 -5.6C2 -5.6 3.1 -4.6 3.1 -3.1C3.1 -1 0 -0.4 0 2.2V4.1" fill="none" stroke="#000" stroke-width="1.1"/><rect x="-0.75" y="5.3" width="1.6" height="1.7" fill="#000"/></g><g transform="translate(566.81 14.9)"><path d="M0 -10.1L9.8 0L0 10.1L-9.8 0Z" fill="#fff"/><path d="M-2.6 -3.6C-2.2 -5.1 -1 -5.6 0.3 -5.6C2 -5.6 3.1 -4.6 3.1 -3.1C3.1 -1 0 -0.4 0 2.2V4.1" fill="none" stroke="#000" stroke-width="1.1"/><rect x="-0.75" y="5.3" width="1.6" height="1.7" fill="#000"/></g><g transform="translate(585.75 14.9)"><path d="M0 -10.1L9.8 0L0 10.1L-9.8 0Z" fill="#fff"/><path d="M-2.6 -3.6C-2.2 -5.1 -1 -5.6 0.3 -5.6C2 -5.6 3.1 -4.6 3.1 -3.1C3.1 -1 0 -0.4 0 2.2V4.1" fill="none" stroke="#000" stroke-width="1.1"/><rect x="-0.75" y="5.3" width="1.6" height="1.7" fill="#000"/></g><g transform="translate(604.69 14.9)"><path d="M0 -10.1L9.8 0L0 10.1L-9.8 0Z" fill="#fff"/><path d="M-2.6 -3.6C-2.2 -5.1 -1 -5.6 0.3 -5.6C2 -5.6 3.1 -4.6 3.1 -3.1C3.1 -1 0 -0.4 0 2.2V4.1" fill="none" stroke="#000" stroke-width="1.1"/><rect x="-0.75" y="5.3" width="1.6" height="1.7" fill="#000"/></g><g transform="translate(623.63 14.9)"><path d="M0 -10.1L9.8 0L0 10.1L-9.8 0Z" fill="#fff"/><path d="M-2.6 -3.6C-2.2 -5.1 -1 -5.6 0.3 -5.6C2 -5.6 3.1 -4.6 3.1 -3.1C3.1 -1 0 -0.4 0 2.2V4.1" fill="none" stroke="#000" stroke-width="1.1"/><rect x="-0.75" y="5.3" width="1.6" height="1.7" fill="#000"/></g><g transform="translate(642.57 14.9)"><path d="M0 -10.1L9.8 0L0 10.1L-9.8 0Z" fill="#fff"/><path d="M-2.6 -3.6C-2.2 -5.1 -1 -5.6 0.3 -5.6C2 -5.6 3.1 -4.6 3.1 -3.1C3.1 -1 0 -0.4 0 2.2V4.1" fill="none" stroke="#000" stroke-width="1.1"/><rect x="-0.75" y="5.3" width="1.6" height="1.7" fill="#000"/></g><g transform="translate(661.51 14.9)"><path d="M0 -10.1L9.8 0L0 10.1L-9.8 0Z" fill="#fff"/><path d="M-2.6 -3.6C-2.2 -5.1 -1 -5.6 0.3 -5.6C2 -5.6 3.1 -4.6 3.1 -3.1C3.1 -1 0 -0.4 0 2.2V4.1" fill="none" stroke="#000" stroke-width="1.1"/><rect x="-0.75" y="5.3" width="1.6" height="1.7" fill="#000"/></g><g transform="translate(680.45 14.9)"><path d="M0 -10.1L9.8 0L0 10.1L-9.8 0Z" fill="#fff"/><path d="M-2.6 -3.6C-2.2 -5.1 -1 -5.6 0.3 -5.6C2 -5.6 3.1 -4.6 3.1 -3.1C3.1 -1 0 -0.4 0 2.2V4.1" fill="none" stroke="#000" stroke-width="1.1"/><rect x="-0.75" y="5.3" width="1.6" height="1.7" fill="#000"/></g><g transform="translate(699.39 14.9)"><path d="M0 -10.1L9.8 0L0 10.1L-9.8 0Z" fill="#fff"/><path d="M-2.6 -3.6C-2.2 -5.1 -1 -5.6 0.3 -5.6C2 -5.6 3.1 -4.6 3.1 -3.1C3.1 -1 0 -0.4 0 2.2V4.1" fill="none" stroke="#000" stroke-width="1.1"/><rect x="-0.75" y="5.3" width="1.6" height="1.7" fill="#000"/></g><g transform="translate(718.33 14.9)"><path d="M0 -10.1L9.8 0L0 10.1L-9.8 0Z" fill="#fff"/><path d="M-2.6 -3.6C-2.2 -5.1 -1 -5.6 0.3 -5.6C2 -5.6 3.1 -4.6 3.1 -3.1C3.1 -1 0 -0.4 0 2.2V4.1" fill="none" stroke="#000" stroke-width="1.1"/><rect x="-0.75" y="5.3" width="1.6" height="1.7" fill="#000"/></g><g transform="translate(737.27 14.9)"><path d="M0 -10.1L9.8 0L0 10.1L-9.8 0Z" fill="#fff"/><path d="M-2.6 -3.6C-2.2 -5.1 -1 -5.6 0.3 -5.6C2 -5.6 3.1 -4.6 3.1 -3.1C3.1 -1 0 -0.4 0 2.2V4.1" fill="none" stroke="#000" stroke-width="1.1"/><rect x="-0.75" y="5.3" width="1.6" height="1.7" fill="#000"/></g><g transform="translate(756.21 14.9)"><path d="M0 -10.1L9.8 0L0 10.1L-9.8 0Z" fill="#fff"/><path d="M-2.6 -3.6C-2.2 -5.1 -1 -5.6 0.3 -5.6C2 -5.6 3.1 -4.6 3.1 -3.1C3.1 -1 0 -0.4 0 2.2V4.1" fill="none" stroke="#000" stroke-width="1.1"/><rect x="-0.75" y="5.3" width="1.6" height="1.7" fill="#000"/></g><g transform="translate(775.15 14.9)"><path d="M0 -10.1L9.8 0L0 10.1L-9.8 0Z" fill="#fff"/><path d="M-2.6 -3.6C-2.2 -5.1 -1 -5.6 0.3 -5.6C2 -5.6 3.1 -4.6 3.1 -3.1C3.1 -1 0 -0.4 0 2.2V4.1" fill="none" stroke="#000" stroke-width="1.1"/><rect x="-0.75" y="5.3" width="1.6" height="1.7" fill="#000"/></g><g transform="translate(794.09 14.9)"><path d="M0 -10.1L9.8 0L0 10.1L-9.8 0Z" fill="#fff"/><path d="M-2.6 -3.6C-2.2 -5.1 -1 -5.6 0.3 -5.6C2 -5.6 3.1 -4.6 3.1 -3.1C3.1 -1 0 -0.4 0 2.2V4.1" fill="none" stroke="#000" stroke-width="1.1"/><rect x="-0.75" y="5.3" width="1.6" height="1.7" fill="#000"/></g><g transform="translate(813.03 14.9)"><path d="M0 -10.1L9.8 0L0 10.1L-9.8 0Z" fill="#fff"/><path d="M-2.6 -3.6C-2.2 -5.1 -1 -5.6 0.3 -5.6C2 -5.6 3.1 -4.6 3.1 -3.1C3.1 -1 0 -0.4 0 2.2V4.1" fill="none" stroke="#000" stroke-width="1.1"/><rect x="-0.75" y="5.3" width="1.6" height="1.7" fill="#000"/></g><g transform="translate(831.97 14.9)"><path d="M0 -10.1L9.8 0L0 10.1L-9.8 0Z" fill="#fff"/><path d="M-2.6 -3.6C-2.2 -5.1 -1 -5.6 0.3 -5.6C2 -5.6 3.1 -4.6 3.1 -3.1C3.1 -1 0 -0.4 0 2.2V4.1" fill="none" stroke="#000" stroke-width="1.1"/><rect x="-0.75" y="5.3" width="1.6" height="1.7" fill="#000"/></g><g transform="translate(850.91 14.9)"><path d="M0 -10.1L9.8 0L0 10.1L-9.8 0Z" fill="#fff"/><path d="M-2.6 -3.6C-2.2 -5.1 -1 -5.6 0.3 -5.6C2 -5.6 3.1 -4.6 3.1 -3.1C3.1 -1 0 -0.4 0 2.2V4.1" fill="none" stroke="#000" stroke-width="1.1"/><rect x="-0.75" y="5.3" width="1.6" height="1.7" fill="#000"/></g><g transform="translate(869.85 14.9)"><path d="M0 -10.1L9.8 0L0 10.1L-9.8 0Z" fill="#fff"/><path d="M-2.6 -3.6C-2.2 -5.1 -1 -5.6 0.3 -5.6C2 -5.6 3.1 -4.6 3.1 -3.1C3.1 -1 0 -0.4 0 2.2V4.1" fill="none" stroke="#000" stroke-width="1.1"/><rect x="-0.75" y="5.3" width="1.6" height="1.7" fill="#000"/></g><g transform="translate(888.79 14.9)"><path d="M0 -10.1L9.8 0L0 10.1L-9.8 0Z" fill="#fff"/><path d="M-2.6 -3.6C-2.2 -5.1 -1 -5.6 0.3 -5.6C2 -5.6 3.1 -4.6 3.1 -3.1C3.1 -1 0 -0.4 0 2.2V4.1" fill="none" stroke="#000" stroke-width="1.1"/><rect x="-0.75" y="5.3" width="1.6" height="1.7" fill="#000"/></g><g transform="translate(907.73 14.9)"><path d="M0 -10.1L9.8 0L0 10.1L-9.8 0Z" fill="#fff"/><path d="M-2.6 -3.6C-2.2 -5.1 -1 -5.6 0.3 -5.6C2 -5.6 3.1 -4.6 3.1 -3.1C3.1 -1 0 -0.4 0 2.2V4.1" fill="none" stroke="#000" stroke-width="1.1"/><rect x="-0.75" y="5.3" width="1.6" height="1.7" fill="#000"/></g><g transform="translate(926.67 14.9)"><path d="M0 -10.1L9.8 0L0 10.1L-9.8 0Z" fill="#fff"/><path d="M-2.6 -3.6C-2.2 -5.1 -1 -5.6 0.3 -5.6C2 -5.6 3.1 -4.6 3.1 -3.1C3.1 -1 0 -0.4 0 2.2V4.1" fill="none" stroke="#000" stroke-width="1.1"/><rect x="-0.75" y="5.3" width="1.6" height="1.7" fill="#000"/></g><g transform="translate(945.61 14.9)"><path d="M0 -10.1L9.8 0L0 10.1L-9.8 0Z" fill="#fff"/><path d="M-2.6 -3.6C-2.2 -5.1 -1 -5.6 0.3 -5.6C2 -5.6 3.1 -4.6 3.1 -3.1C3.1 -1 0 -0.4 0 2.2V4.1" fill="none" stroke="#000" stroke-width="1.1"/><rect x="-0.75" y="5.3" width="1.6" height="1.7" fill="#000"/></g><g transform="translate(964.55 14.9)"><path d="M0 -10.1L9.8 0L0 10.1L-9.8 0Z" fill="#fff"/><path d="M-2.6 -3.6C-2.2 -5.1 -1 -5.6 0.3 -5.6C2 -5.6 3.1 -4.6 3.1 -3.1C3.1 -1 0 -0.4 0 2.2V4.1" fill="none" stroke="#000" stroke-width="1.1"/><rect x="-0.75" y="5.3" width="1.6" height="1.7" fill="#000"/></g><g transform="translate(983.49 14.9)"><path d="M0 -10.1L9.8 0L0 10.1L-9.8 0Z" fill="#fff"/><path d="M-2.6 -3.6C-2.2 -5.1 -1 -5.6 0.3 -5.6C2 -5.6 3.1 -4.6 3.1 -3.1C3.1 -1 0 -0.4 0 2.2V4.1" fill="none" stroke="#000" stroke-width="1.1"/><rect x="-0.75" y="5.3" width="1.6" height="1.7" fill="#000"/></g><g transform="translate(1002.43 14.9)"><path d="M0 -10.1L9.8 0L0 10.1L-9.8 0Z" fill="#fff"/><path d="M-2.6 -3.6C-2.2 -5.1 -1 -5.6 0.3 -5.6C2 -5.6 3.1 -4.6 3.1 -3.1C3.1 -1 0 -0.4 0 2.2V4.1" fill="none" stroke="#000" stroke-width="1.1"/><rect x="-0.75" y="5.3" width="1.6" height="1.7" fill="#000"/></g><g transform="translate(1021.37 14.9)"><path d="M0 -10.1L9.8 0L0 10.1L-9.8 0Z" fill="#fff"/><path d="M-2.6 -3.6C-2.2 -5.1 -1 -5.6 0.3 -5.6C2 -5.6 3.1 -4.6 3.1 -3.1C3.1 -1 0 -0.4 0 2.2V4.1" fill="none" stroke="#000" stroke-width="1.1"/><rect x="-0.75" y="5.3" width="1.6" height="1.7" fill="#000"/></g><g transform="translate(1040.31 14.9)"><path d="M0 -10.1L9.8 0L0 10.1L-9.8 0Z" fill="#fff"/><path d="M-2.6 -3.6C-2.2 -5.1 -1 -5.6 0.3 -5.6C2 -5.6 3.1 -4.6 3.1 -3.1C3.1 -1 0 -0.4 0 2.2V4.1" fill="none" stroke="#000" stroke-width="1.1"/><rect x="-0.75" y="5.3" width="1.6" height="1.7" fill="#000"/></g><g transform="translate(1059.25 14.9)"><path d="M0 -10.1L9.8 0L0 10.1L-9.8 0Z" fill="#fff"/><path d="M-2.6 -3.6C-2.2 -5.1 -1 -5.6 0.3 -5.6C2 -5.6 3.1 -4.6 3.1 -3.1C3.1 -1 0 -0.4 0 2.2V4.1" fill="none" stroke="#000" stroke-width="1.1"/><rect x="-0.75" y="5.3" width="1.6" height="1.7" fill="#000"/></g><g transform="translate(1078.19 14.9)"><path d="M0 -10.1L9.8 0L0 10.1L-9.8 0Z" fill="#fff"/><path d="M-2.6 -3.6C-2.2 -5.1 -1 -5.6 0.3 -5.6C2 -5.6 3.1 -4.6 3.1 -3.1C3.1 -1 0 -0.4 0 2.2V4.1" fill="none" stroke="#000" stroke-width="1.1"/><rect x="-0.75" y="5.3" width="1.6" height="1.7" fill="#000"/></g><g transform="translate(1097.13 14.9)"><path d="M0 -10.1L9.8 0L0 10.1L-9.8 0Z" fill="#fff"/><path d="M-2.6 -3.6C-2.2 -5.1 -1 -5.6 0.3 -5.6C2 -5.6 3.1 -4.6 3.1 -3.1C3.1 -1 0 -0.4 0 2.2V4.1" fill="none" stroke="#000" stroke-width="1.1"/><rect x="-0.75" y="5.3" width="1.6" height="1.7" fill="#000"/></g><g transform="translate(1116.07 14.9)"><path d="M0 -10.1L9.8 0L0 10.1L-9.8 0Z" fill="#fff"/><path d="M-2.6 -3.6C-2.2 -5.1 -1 -5.6 0.3 -5.6C2 -5.6 3.1 -4.6 3.1 -3.1C3.1 -1 0 -0.4 0 2.2V4.1" fill="none" stroke="#000" stroke-width="1.1"/><rect x="-0.75" y="5.3" width="1.6" height="1.7" fill="#000"/></g><g transform="translate(1135.01 14.9)"><path d="M0 -10.1L9.8 0L0 10.1L-9.8 0Z" fill="#fff"/><path d="M-2.6 -3.6C-2.2 -5.1 -1 -5.6 0.3 -5.6C2 -5.6 3.1 -4.6 3.1 -3.1C3.1 -1 0 -0.4 0 2.2V4.1" fill="none" stroke="#000" stroke-width="1.1"/><rect x="-0.75" y="5.3" width="1.6" height="1.7" fill="#000"/></g><g transform="translate(1153.95 14.9)"><path d="M0 -10.1L9.8 0L0 10.1L-9.8 0Z" fill="#fff"/><path d="M-2.6 -3.6C-2.2 -5.1 -1 -5.6 0.3 -5.6C2 -5.6 3.1 -4.6 3.1 -3.1C3.1 -1 0 -0.4 0 2.2V4.1" fill="none" stroke="#000" stroke-width="1.1"/><rect x="-0.75" y="5.3" width="1.6" height="1.7" fill="#000"/></g><g transform="translate(1172.89 14.9)"><path d="M0 -10.1L9.8 0L0 10.1L-9.8 0Z" fill="#fff"/><path d="M-2.6 -3.6C-2.2 -5.1 -1 -5.6 0.3 -5.6C2 -5.6 3.1 -4.6 3.1 -3.1C3.1 -1 0 -0.4 0 2.2V4.1" fill="none" stroke="#000" stroke-width="1.1"/><rect x="-0.75" y="5.3" width="1.6" height="1.7" fill="#000"/></g><g transform="translate(1191.83 14.9)"><path d="M0 -10.1L9.8 0L0 10.1L-9.8 0Z" fill="#fff"/><path d="M-2.6 -3.6C-2.2 -5.1 -1 -5.6 0.3 -5.6C2 -5.6 3.1 -4.6 3.1 -3.1C3.1 -1 0 -0.4 0 2.2V4.1" fill="none" stroke="#000" stroke-width="1.1"/><rect x="-0.75" y="5.3" width="1.6" height="1.7" fill="#000"/></g><g transform="translate(1210.77 14.9)"><path d="M0 -10.1L9.8 0L0 10.1L-9.8 0Z" fill="#fff"/><path d="M-2.6 -3.6C-2.2 -5.1 -1 -5.6 0.3 -5.6C2 -5.6 3.1 -4.6 3.1 -3.1C3.1 -1 0 -0.4 0 2.2V4.1" fill="none" stroke="#000" stroke-width="1.1"/><rect x="-0.75" y="5.3" width="1.6" height="1.7" fill="#000"/></g><g transform="translate(1229.71 14.9)"><path d="M0 -10.1L9.8 0L0 10.1L-9.8 0Z" fill="#fff"/><path d="M-2.6 -3.6C-2.2 -5.1 -1 -5.6 0.3 -5.6C2 -5.6 3.1 -4.6 3.1 -3.1C3.1 -1 0 -0.4 0 2.2V4.1" fill="none" stroke="#000" stroke-width="1.1"/><rect x="-0.75" y="5.3" width="1.6" height="1.7" fill="#000"/></g><g transform="translate(1248.65 14.9)"><path d="M0 -10.1L9.8 0L0 10.1L-9.8 0Z" fill="#fff"/><path d="M-2.6 -3.6C-2.2 -5.1 -1 -5.6 0.3 -5.6C2 -5.6 3.1 -4.6 3.1 -3.1C3.1 -1 0 -0.4 0 2.2V4.1" fill="none" stroke="#000" stroke-width="1.1"/><rect x="-0.75" y="5.3" width="1.6" height="1.7" fill="#000"/></g><g transform="translate(1267.59 14.9)"><path d="M0 -10.1L9.8 0L0 10.1L-9.8 0Z" fill="#fff"/><path d="M-2.6 -3.6C-2.2 -5.1 -1 -5.6 0.3 -5.6C2 -5.6 3.1 -4.6 3.1 -3.1C3.1 -1 0 -0.4 0 2.2V4.1" fill="none" stroke="#000" stroke-width="1.1"/><rect x="-0.75" y="5.3" width="1.6" height="1.7" fill="#000"/></g><g transform="translate(1286.53 14.9)"><path d="M0 -10.1L9.8 0L0 10.1L-9.8 0Z" fill="#fff"/><path d="M-2.6 -3.6C-2.2 -5.1 -1 -5.6 0.3 -5.6C2 -5.6 3.1 -4.6 3.1 -3.1C3.1 -1 0 -0.4 0 2.2V4.1" fill="none" stroke="#000" stroke-width="1.1"/><rect x="-0.75" y="5.3" width="1.6" height="1.7" fill="#000"/></g><g transform="translate(1305.47 14.9)"><path d="M0 -10.1L9.8 0L0 10.1L-9.8 0Z" fill="#fff"/><path d="M-2.6 -3.6C-2.2 -5.1 -1 -5.6 0.3 -5.6C2 -5.6 3.1 -4.6 3.1 -3.1C3.1 -1 0 -0.4 0 2.2V4.1" fill="none" stroke="#000" stroke-width="1.1"/><rect x="-0.75" y="5.3" width="1.6" height="1.7" fill="#000"/></g><g transform="translate(1324.41 14.9)"><path d="M0 -10.1L9.8 0L0 10.1L-9.8 0Z" fill="#fff"/><path d="M-2.6 -3.6C-2.2 -5.1 -1 -5.6 0.3 -5.6C2 -5.6 3.1 -4.6 3.1 -3.1C3.1 -1 0 -0.4 0 2.2V4.1" fill="none" stroke="#000" stroke-width="1.1"/><rect x="-0.75" y="5.3" width="1.6" height="1.7" fill="#000"/></g><g transform="translate(1343.35 14.9)"><path d="M0 -10.1L9.8 0L0 10.1L-9.8 0Z" fill="#fff"/><path d="M-2.6 -3.6C-2.2 -5.1 -1 -5.6 0.3 -5.6C2 -5.6 3.1 -4.6 3.1 -3.1C3.1 -1 0 -0.4 0 2.2V4.1" fill="none" stroke="#000" stroke-width="1.1"/><rect x="-0.75" y="5.3" width="1.6" height="1.7" fill="#000"/></g><g transform="translate(1362.29 14.9)"><path d="M0 -10.1L9.8 0L0 10.1L-9.8 0Z" fill="#fff"/><path d="M-2.6 -3.6C-2.2 -5.1 -1 -5.6 0.3 -5.6C2 -5.6 3.1 -4.6 3.1 -3.1C3.1 -1 0 -0.4 0 2.2V4.1" fill="none" stroke="#000" stroke-width="1.1"/><rect x="-0.75" y="5.3" width="1.6" height="1.7" fill="#000"/></g><g transform="translate(1381.23 14.9)"><path d="M0 -10.1L9.8 0L0 10.1L-9.8 0Z" fill="#fff"/><path d="M-2.6 -3.6C-2.2 -5.1 -1 -5.6 0.3 -5.6C2 -5.6 3.1 -4.6 3.1 -3.1C3.1 -1 0 -0.4 0 2.2V4.1" fill="none" stroke="#000" stroke-width="1.1"/><rect x="-0.75" y="5.3" width="1.6" height="1.7" fill="#000"/></g><g transform="translate(1400.17 14.9)"><path d="M0 -10.1L9.8 0L0 10.1L-9.8 0Z" fill="#fff"/><path d="M-2.6 -3.6C-2.2 -5.1 -1 -5.6 0.3 -5.6C2 -5.6 3.1 -4.6 3.1 -3.1C3.1 -1 0 -0.4 0 2.2V4.1" fill="none" stroke="#000" stroke-width="1.1"/><rect x="-0.75" y="5.3" width="1.6" height="1.7" fill="#000"/></g><g transform="translate(1419.11 14.9)"><path d="M0 -10.1L9.8 0L0 10.1L-9.8 0Z" fill="#fff"/><path d="M-2.6 -3.6C-2.2 -5.1 -1 -5.6 0.3 -5.6C2 -5.6 3.1 -4.6 3.1 -3.1C3.1 -1 0 -0.4 0 2.2V4.1" fill="none" stroke="#000" stroke-width="1.1"/><rect x="-0.75" y="5.3" width="1.6" height="1.7" fill="#000"/></g><g transform="translate(1438.05 14.9)"><path d="M0 -10.1L9.8 0L0 10.1L-9.8 0Z" fill="#fff"/><path d="M-2.6 -3.6C-2.2 -5.1 -1 -5.6 0.3 -5.6C2 -5.6 3.1 -4.6 3.1 -3.1C3.1 -1 0 -0.4 0 2.2V4.1" fill="none" stroke="#000" stroke-width="1.1"/><rect x="-0.75" y="5.3" width="1.6" height="1.7" fill="#000"/></g><g transform="translate(1456.99 14.9)"><path d="M0 -10.1L9.8 0L0 10.1L-9.8 0Z" fill="#fff"/><path d="M-2.6 -3.6C-2.2 -5.1 -1 -5.6 0.3 -5.6C2 -5.6 3.1 -4.6 3.1 -3.1C3.1 -1 0 -0.4 0 2.2V4.1" fill="none" stroke="#000" stroke-width="1.1"/><rect x="-0.75" y="5.3" width="1.6" height="1.7" fill="#000"/></g><g transform="translate(1475.93 14.9)"><path d="M0 -10.1L9.8 0L0 10.1L-9.8 0Z" fill="#fff"/><path d="M-2.6 -3.6C-2.2 -5.1 -1 -5.6 0.3 -5.6C2 -5.6 3.1 -4.6 3.1 -3.1C3.1 -1 0 -0.4 0 2.2V4.1" fill="none" stroke="#000" stroke-width="1.1"/><rect x="-0.75" y="5.3" width="1.6" height="1.7" fill="#000"/></g><g transform="translate(1494.87 14.9)"><path d="M0 -10.1L9.8 0L0 10.1L-9.8 0Z" fill="#fff"/><path d="M-2.6 -3.6C-2.2 -5.1 -1 -5.6 0.3 -5.6C2 -5.6 3.1 -4.6 3.1 -3.1C3.1 -1 0 -0.4 0 2.2V4.1" fill="none" stroke="#000" stroke-width="1.1"/><rect x="-0.75" y="5.3" width="1.6" height="1.7" fill="#000"/></g><g transform="translate(1513.81 14.9)"><path d="M0 -10.1L9.8 0L0 10.1L-9.8 0Z" fill="#fff"/><path d="M-2.6 -3.6C-2.2 -5.1 -1 -5.6 0.3 -5.6C2 -5.6 3.1 -4.6 3.1 -3.1C3.1 -1 0 -0.4 0 2.2V4.1" fill="none" stroke="#000" stroke-width="1.1"/><rect x="-0.75" y="5.3" width="1.6" height="1.7" fill="#000"/></g><g transform="translate(1532.75 14.9)"><path d="M0 -10.1L9.8 0L0 10.1L-9.8 0Z" fill="#fff"/><path d="M-2.6 -3.6C-2.2 -5.1 -1 -5.6 0.3 -5.6C2 -5.6 3.1 -4.6 3.1 -3.1C3.1 -1 0 -0.4 0 2.2V4.1" fill="none" stroke="#000" stroke-width="1.1"/><rect x="-0.75" y="5.3" width="1.6" height="1.7" fill="#000"/></g><g transform="translate(1551.69 14.9)"><path d="M0 -10.1L9.8 0L0 10.1L-9.8 0Z" fill="#fff"/><path d="M-2.6 -3.6C-2.2 -5.1 -1 -5.6 0.3 -5.6C2 -5.6 3.1 -4.6 3.1 -3.1C3.1 -1 0 -0.4 0 2.2V4.1" fill="none" stroke="#000" stroke-width="1.1"/><rect x="-0.75" y="5.3" width="1.6" height="1.7" fill="#000"/></g><g transform="translate(1570.63 14.9)"><path d="M0 -10.1L9.8 0L0 10.1L-9.8 0Z" fill="#fff"/><path d="M-2.6 -3.6C-2.2 -5.1 -1 -5.6 0.3 -5.6C2 -5.6 3.1 -4.6 3.1 -3.1C3.1 -1 0 -0.4 0 2.2V4.1" fill="none" stroke="#000" stroke-width="1.1"/><rect x="-0.75" y="5.3" width="1.6" height="1.7" fill="#000"/></g><g transform="translate(1589.57 14.9)"><path d="M0 -10.1L9.8 0L0 10.1L-9.8 0Z" fill="#fff"/><path d="M-2.6 -3.6C-2.2 -5.1 -1 -5.6 0.3 -5.6C2 -5.6 3.1 -4.6 3.1 -3.1C3.1 -1 0 -0.4 0 2.2V4.1" fill="none" stroke="#000" stroke-width="1.1"/><rect x="-0.75" y="5.3" width="1.6" height="1.7" fill="#000"/></g><g transform="translate(1608.51 14.9)"><path d="M0 -10.1L9.8 0L0 10.1L-9.8 0Z" fill="#fff"/><path d="M-2.6 -3.6C-2.2 -5.1 -1 -5.6 0.3 -5.6C2 -5.6 3.1 -4.6 3.1 -3.1C3.1 -1 0 -0.4 0 2.2V4.1" fill="none" stroke="#000" stroke-width="1.1"/><rect x="-0.75" y="5.3" width="1.6" height="1.7" fill="#000"/></g><g transform="translate(1627.45 14.9)"><path d="M0 -10.1L9.8 0L0 10.1L-9.8 0Z" fill="#fff"/><path d="M-2.6 -3.6C-2.2 -5.1 -1 -5.6 0.3 -5.6C2 -5.6 3.1 -4.6 3.1 -3.1C3.1 -1 0 -0.4 0 2.2V4.1" fill="none" stroke="#000" stroke-width="1.1"/><rect x="-0.75" y="5.3" width="1.6" height="1.7" fill="#000"/></g><g transform="translate(1646.39 14.9)"><path d="M0 -10.1L9.8 0L0 10.1L-9.8 0Z" fill="#fff"/><path d="M-2.6 -3.6C-2.2 -5.1 -1 -5.6 0.3 -5.6C2 -5.6 3.1 -4.6 3.1 -3.1C3.1 -1 0 -0.4 0 2.2V4.1" fill="none" stroke="#000" stroke-width="1.1"/><rect x="-0.75" y="5.3" width="1.6" height="1.7" fill="#000"/></g><g transform="translate(1665.33 14.9)"><path d="M0 -10.1L9.8 0L0 10.1L-9.8 0Z" fill="#fff"/><path d="M-2.6 -3.6C-2.2 -5.1 -1 -5.6 0.3 -5.6C2 -5.6 3.1 -4.6 3.1 -3.1C3.1 -1 0 -0.4 0 2.2V4.1" fill="none" stroke="#000" stroke-width="1.1"/><rect x="-0.75" y="5.3" width="1.6" height="1.7" fill="#000"/></g><g transform="translate(1684.27 14.9)"><path d="M0 -10.1L9.8 0L0 10.1L-9.8 0Z" fill="#fff"/><path d="M-2.6 -3.6C-2.2 -5.1 -1 -5.6 0.3 -5.6C2 -5.6 3.1 -4.6 3.1 -3.1C3.1 -1 0 -0.4 0 2.2V4.1" fill="none" stroke="#000" stroke-width="1.1"/><rect x="-0.75" y="5.3" width="1.6" height="1.7" fill="#000"/></g><g transform="translate(1703.21 14.9)"><path d="M0 -10.1L9.8 0L0 10.1L-9.8 0Z" fill="#fff"/><path d="M-2.6 -3.6C-2.2 -5.1 -1 -5.6 0.3 -5.6C2 -5.6 3.1 -4.6 3.1 -3.1C3.1 -1 0 -0.4 0 2.2V4.1" fill="none" stroke="#000" stroke-width="1.1"/><rect x="-0.75" y="5.3" width="1.6" height="1.7" fill="#000"/></g><g transform="translate(1722.15 14.9)"><path d="M0 -10.1L9.8 0L0 10.1L-9.8 0Z" fill="#fff"/><path d="M-2.6 -3.6C-2.2 -5.1 -1 -5.6 0.3 -5.6C2 -5.6 3.1 -4.6 3.1 -3.1C3.1 -1 0 -0.4 0 2.2V4.1" fill="none" stroke="#000" stroke-width="1.1"/><rect x="-0.75" y="5.3" width="1.6" height="1.7" fill="#000"/></g><g transform="translate(1741.09 14.9)"><path d="M0 -10.1L9.8 0L0 10.1L-9.8 0Z" fill="#fff"/><path d="M-2.6 -3.6C-2.2 -5.1 -1 -5.6 0.3 -5.6C2 -5.6 3.1 -4.6 3.1 -3.1C3.1 -1 0 -0.4 0 2.2V4.1" fill="none" stroke="#000" stroke-width="1.1"/><rect x="-0.75" y="5.3" width="1.6" height="1.7" fill="#000"/></g><g transform="translate(1760.03 14.9)"><path d="M0 -10.1L9.8 0L0 10.1L-9.8 0Z" fill="#fff"/><path d="M-2.6 -3.6C-2.2 -5.1 -1 -5.6 0.3 -5.6C2 -5.6 3.1 -4.6 3.1 -3.1C3.1 -1 0 -0.4 0 2.2V4.1" fill="none" stroke="#000" stroke-width="1.1"/><rect x="-0.75" y="5.3" width="1.6" height="1.7" fill="#000"/></g><g transform="translate(1778.97 14.9)"><path d="M0 -10.1L9.8 0L0 10.1L-9.8 0Z" fill="#fff"/><path d="M-2.6 -3.6C-2.2 -5.1 -1 -5.6 0.3 -5.6C2 -5.6 3.1 -4.6 3.1 -3.1C3.1 -1 0 -0.4 0 2.2V4.1" fill="none" stroke="#000" stroke-width="1.1"/><rect x="-0.75" y="5.3" width="1.6" height="1.7" fill="#000"/></g><g transform="translate(1797.91 14.9)"><path d="M0 -10.1L9.8 0L0 10.1L-9.8 0Z" fill="#fff"/><path d="M-2.6 -3.6C-2.2 -5.1 -1 -5.6 0.3 -5.6C2 -5.6 3.1 -4.6 3.1 -3.1C3.1 -1 0 -0.4 0 2.2V4.1" fill="none" stroke="#000" stroke-width="1.1"/><rect x="-0.75" y="5.3" width="1.6" height="1.7" fill="#000"/></g><g transform="translate(1816.85 14.9)"><path d="M0 -10.1L9.8 0L0 10.1L-9.8 0Z" fill="#fff"/><path d="M-2.6 -3.6C-2.2 -5.1 -1 -5.6 0.3 -5.6C2 -5.6 3.1 -4.6 3.1 -3.1C3.1 -1 0 -0.4 0 2.2V4.1" fill="none" stroke="#000" stroke-width="1.1"/><rect x="-0.75" y="5.3" width="1.6" height="1.7" fill="#000"/></g><g transform="translate(1835.79 14.9)"><path d="M0 -10.1L9.8 0L0 10.1L-9.8 0Z" fill="#fff"/><path d="M-2.6 -3.6C-2.2 -5.1 -1 -5.6 0.3 -5.6C2 -5.6 3.1 -4.6 3.1 -3.1C3.1 -1 0 -0.4 0 2.2V4.1" fill="none" stroke="#000" stroke-width="1.1"/><rect x="-0.75" y="5.3" width="1.6" height="1.7" fill="#000"/></g><g transform="translate(1854.73 14.9)"><path d="M0 -10.1L9.8 0L0 10.1L-9.8 0Z" fill="#fff"/><path d="M-2.6 -3.6C-2.2 -5.1 -1 -5.6 0.3 -5.6C2 -5.6 3.1 -4.6 3.1 -3.1C3.1 -1 0 -0.4 0 2.2V4.1" fill="none" stroke="#000" stroke-width="1.1"/><rect x="-0.75" y="5.3" width="1.6" height="1.7" fill="#000"/></g><g transform="translate(1873.67 14.9)"><path d="M0 -10.1L9.8 0L0 10.1L-9.8 0Z" fill="#fff"/><path d="M-2.6 -3.6C-2.2 -5.1 -1 -5.6 0.3 -5.6C2 -5.6 3.1 -4.6 3.1 -3.1C3.1 -1 0 -0.4 0 2.2V4.1" fill="none" stroke="#000" stroke-width="1.1"/><rect x="-0.75" y="5.3" width="1.6" height="1.7" fill="#000"/></g><g transform="translate(1892.61 14.9)"><path d="M0 -10.1L9.8 0L0 10.1L-9.8 0Z" fill="#fff"/><path d="M-2.6 -3.6C-2.2 -5.1 -1 -5.6 0.3 -5.6C2 -5.6 3.1 -4.6 3.1 -3.1C3.1 -1 0 -0.4 0 2.2V4.1" fill="none" stroke="#000" stroke-width="1.1"/><rect x="-0.75" y="5.3" width="1.6" height="1.7" fill="#000"/></g></svg>
<div class="r" style="left:656px;top:1601px;width:198px;height:15px;background:#457585;"></div>
<div class="r" style="left:2px;top:1635px;width:2546px;height:1px;background:#6fc3df;"></div>
<div class="t" style="left:2193.4px;top:1643.76px;font-size:18px;color:#fff;font-weight:400;letter-spacing:-0.31px;font-family:"Liberation Sans", sans-serif;">Arduino UNO R4 WiFi an COM7</div>
<svg class="r" style="left:2460px;top:1640px" width="26" height="26" viewBox="0 0 26 26"><g transform="translate(12.6 12.6) scale(0.9) translate(-12.9 -12.9)"><path d="M5.5 17.5V11.5C5.5 7.5 8.5 4 12.9 4C17.3 4 20.3 7.5 20.3 11.5V17.5L21.6 19.4H4.2Z" fill="none" stroke="#fff" stroke-width="2" stroke-linejoin="round"/><path d="M10.6 20.5A2.3 2.3 0 0 0 15.2 20.5" fill="none" stroke="#fff" stroke-width="2"/></g></svg>
<svg class="r" style="left:2504px;top:1642px" width="24" height="22" viewBox="0 0 24 22"><rect x="3.2" y="3.4" width="18" height="15" fill="none" stroke="#fff" stroke-width="2"/><path d="M3.2 7.4H21.2" stroke="#fff" stroke-width="2"/></svg></body></html>
